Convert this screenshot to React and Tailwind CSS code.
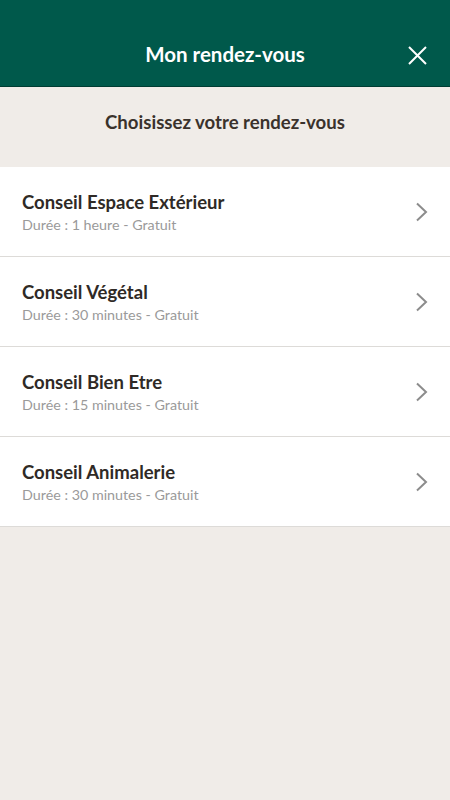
const rdvs = [
  { title: "Conseil Espace Extérieur", duree: "1 heure" },
  { title: "Conseil Végétal", duree: "30 minutes" },
  { title: "Conseil Bien Etre", duree: "15 minutes" },
  { title: "Conseil Animalerie", duree: "30 minutes" },
];

function Chevron() {
  return (
    <svg width="13" height="20" viewBox="0 0 13 20" fill="none" stroke="#8c8c8c" strokeWidth="2">
      <path d="M2 1.5l9 8.5-9 8.5" />
    </svg>
  );
}

export default function App() {
  return (
    <div
      className="min-h-[800px] bg-[#f0ece8] flex flex-col"
      style={{ fontFamily: "Lato, 'Open Sans', sans-serif" }}
    >
      {/* Header */}
      <div className="h-[87px] bg-[#00594b] border-b border-[#003d33] relative flex items-center justify-center">
        <h1 className="text-white text-[20.5px] font-bold pt-[22px]">Mon rendez-vous</h1>
        <button className="absolute right-[22px] top-[44px] w-[22px] h-[22px] flex items-center justify-center">
          <svg width="19" height="19" viewBox="0 0 19 19" stroke="white" strokeWidth="2">
            <path d="M1 1l17 17M18 1L1 18" />
          </svg>
        </button>
      </div>

      {/* Subheader */}
      <div className="h-[80px] flex items-center justify-center pb-[8px]">
        <p className="text-[#3a322c] text-[18.6px] font-bold">Choisissez votre rendez-vous</p>
      </div>

      {/* List */}
      <ul className="bg-white">
        {rdvs.map((r) => (
          <li
            key={r.title}
            className="h-[90px] border-b border-[#dddbd8] flex items-center justify-between pl-[22px] pr-[22px]"
          >
            <div className="flex flex-col pt-[1px]">
              <span className="text-[#2f2a26] text-[18.5px] font-bold leading-[24px]">{r.title}</span>
              <span className="text-[#9a9a9a] text-[14.3px] leading-[21px]">
                Durée : {r.duree} - Gratuit
              </span>
            </div>
            <Chevron />
          </li>
        ))}
      </ul>
    </div>
  );
}
